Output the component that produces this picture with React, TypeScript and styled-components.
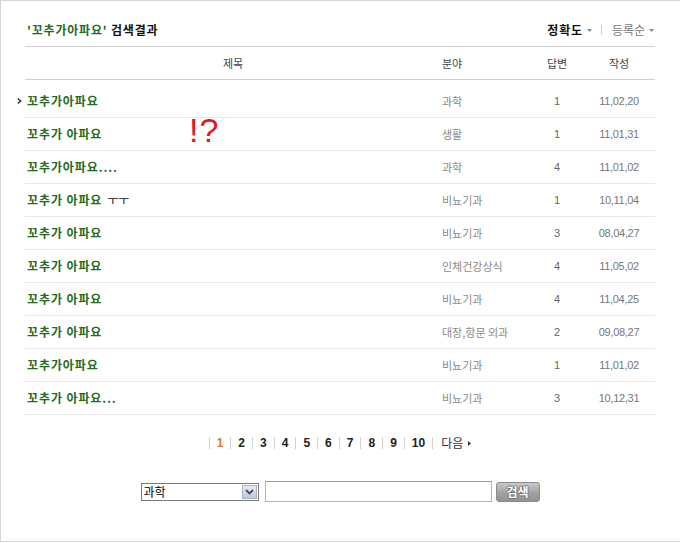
import React from "react";
import styled, { createGlobalStyle } from "styled-components";

const GlobalStyle = createGlobalStyle`
  html, body {
    margin: 0;
    padding: 0;
    background: #fff;
  }
  body {
    font-family: "Liberation Sans", "Noto Sans CJK KR", sans-serif;
    font-size: 12px;
    color: #333;
  }
`;

type Result = {
  title: string;
  suffix?: string;
  field: string;
  answers: number;
  date: string;
};

const results: Result[] = [
  { title: "꼬추가아파요", field: "과학", answers: 1, date: "11,02,20" },
  { title: "꼬추가 아파요", field: "생활", answers: 1, date: "11,01,31" },
  { title: "꼬추가아파요....", field: "과학", answers: 4, date: "11,01,02" },
  { title: "꼬추가 아파요", suffix: "ㅜㅜ", field: "비뇨기과", answers: 1, date: "10,11,04" },
  { title: "꼬추가 아파요", field: "비뇨기과", answers: 3, date: "08,04,27" },
  { title: "꼬추가 아파요", field: "인체건강상식", answers: 4, date: "11,05,02" },
  { title: "꼬추가 아파요", field: "비뇨기과", answers: 4, date: "11,04,25" },
  { title: "꼬추가 아파요", field: "대장,항문 외과", answers: 2, date: "09,08,27" },
  { title: "꼬추가아파요", field: "비뇨기과", answers: 1, date: "11,01,02" },
  { title: "꼬추가 아파요...", field: "비뇨기과", answers: 3, date: "10,12,31" },
];

const pages = [1, 2, 3, 4, 5, 6, 7, 8, 9, 10];

const DownTriangle = () => (
  <svg width="5" height="3" viewBox="0 0 5 3">
    <polygon points="0,0 5,0 2.5,3" fill="#8a8a8a" />
  </svg>
);

const App = () => {
  return (
    <>
      <GlobalStyle />
      <Frame>
        <HeaderBar>
          <SearchTitle>
            <Keyword>'꼬추가아파요'</Keyword> 검색결과
          </SearchTitle>
          <SortMenu>
            <SortOption $active>
              정확도 <DownTriangle />
            </SortOption>
            <SortDivider />
            <SortOption>
              등록순 <DownTriangle />
            </SortOption>
          </SortMenu>
        </HeaderBar>

        <ColumnHeader>
          <HeadCell $align="center">제목</HeadCell>
          <HeadCell $align="left">분야</HeadCell>
          <HeadCell $align="center">답변</HeadCell>
          <HeadCell $align="center">작성</HeadCell>
        </ColumnHeader>

        <List>
          {results.map((r, i) => (
            <Row key={i}>
              <TitleCell>
                {i === 0 && (
                  <CurrentMarker width="5" height="6" viewBox="0 0 5 6">
                    <path d="M0.8 0.6 L3.8 3 L0.8 5.4" fill="none" stroke="#333" strokeWidth="1.4" />
                  </CurrentMarker>
                )}
                <TitleLink>{r.title}</TitleLink>
                {r.suffix && <Suffix>{r.suffix}</Suffix>}
              </TitleCell>
              <FieldCell>{r.field}</FieldCell>
              <AnswerCell>{r.answers}</AnswerCell>
              <DateCell>{r.date}</DateCell>
            </Row>
          ))}
          <Exclaim>!?</Exclaim>
        </List>

        <Pagination>
          <PageDivider />
          {pages.map((p) => (
            <React.Fragment key={p}>
              <PageNumber $current={p === 1}>{p}</PageNumber>
              <PageDivider />
            </React.Fragment>
          ))}
          <NextLink>
            다음
            <svg width="3" height="5" viewBox="0 0 3 5">
              <polygon points="0,0 3,2.5 0,5" fill="#333" />
            </svg>
          </NextLink>
        </Pagination>

        <SearchForm>
          <FakeSelect>
            <SelectValue>과학</SelectValue>
            <SelectArrow>
              <svg width="9" height="6" viewBox="0 0 9 6">
                <path d="M1 1 L4.5 4.5 L8 1" fill="none" stroke="#3c4f72" strokeWidth="1.8" />
              </svg>
            </SelectArrow>
          </FakeSelect>
          <QueryInput type="text" />
          <SearchButton type="button">검색</SearchButton>
        </SearchForm>
      </Frame>
    </>
  );
};

export default App;

const Frame = styled.div`
  width: 680px;
  height: 542px;
  box-sizing: border-box;
  border: 1px solid #d6d6d6;
  border-right: none;
  padding: 0 25px 0 24px;
`;

const HeaderBar = styled.div`
  display: flex;
  justify-content: space-between;
  align-items: center;
  height: 46px;
  box-sizing: border-box;
  padding: 13px 0 0 2px;
  border-bottom: 1px solid #cfcfcf;
`;

const SearchTitle = styled.div`
  font-family: "Noto Sans CJK KR", sans-serif;
  font-size: 12px;
  font-weight: 700;
  line-height: 16px;
  letter-spacing: 0.8px;
  color: #111;
`;

const Keyword = styled.span`
  color: #1f6b1f;
`;

const SortMenu = styled.div`
  display: flex;
  align-items: center;
  padding-right: 1px;
`;

const SortOption = styled.span<{ $active?: boolean }>`
  display: flex;
  align-items: center;
  gap: 4px;
  font-family: "Noto Sans CJK KR", sans-serif;
  font-size: 12px;
  line-height: 16px;
  font-weight: ${(p) => (p.$active ? 700 : 400)};
  letter-spacing: ${(p) => (p.$active ? "0.8px" : "0")};
  color: ${(p) => (p.$active ? "#111" : "#777")};
`;

const SortDivider = styled.span`
  width: 1px;
  height: 10px;
  background: #d0d0d0;
  margin: 0 10px 0 9px;
`;

const gridColumns = "416px 90px 52px 72px";

const ColumnHeader = styled.div`
  display: grid;
  grid-template-columns: ${gridColumns};
  align-items: center;
  height: 32px;
  border-bottom: 1px solid #cfcfcf;
`;

const HeadCell = styled.div<{ $align: "left" | "center" }>`
  text-align: ${(p) => p.$align};
  padding-left: ${(p) => (p.$align === "left" ? "1px" : "0")};
  font-family: "Noto Sans CJK KR", sans-serif;
  font-size: 11px;
  line-height: 14px;
  color: #444;
`;

const List = styled.div`
  position: relative;
  padding-top: 5px;
`;

const Row = styled.div`
  display: grid;
  grid-template-columns: ${gridColumns};
  align-items: center;
  height: 32px;
  border-bottom: 1px solid #e9e9e9;
`;

const TitleCell = styled.div`
  position: relative;
  display: flex;
  align-items: baseline;
  padding-left: 2px;
`;

const CurrentMarker = styled.svg`
  position: absolute;
  left: -8px;
  top: 50%;
  transform: translateY(-50%);
`;

const TitleLink = styled.span`
  font-family: "Noto Sans CJK KR", sans-serif;
  font-size: 12px;
  font-weight: 700;
  line-height: 16px;
  letter-spacing: 0.9px;
  color: #1f6b1f;
  white-space: pre;
`;

const Suffix = styled.span`
  margin-left: 5px;
  font-family: "Noto Sans CJK KR", sans-serif;
  font-size: 12px;
  line-height: 16px;
  color: #111;
`;

const FieldCell = styled.div`
  padding-left: 1px;
  font-family: "Noto Sans CJK KR", sans-serif;
  font-size: 11px;
  line-height: 14px;
  color: #8a8a8a;
  white-space: nowrap;
`;

const AnswerCell = styled.div`
  text-align: center;
  font-size: 11px;
  line-height: 14px;
  color: #666;
`;

const DateCell = styled.div`
  text-align: center;
  font-size: 11px;
  line-height: 14px;
  color: #777;
  letter-spacing: -0.3px;
`;

const Exclaim = styled.div`
  position: absolute;
  left: 164px;
  top: 33px;
  font-family: "Liberation Sans", sans-serif;
  font-size: 34px;
  line-height: 34px;
  color: #e4161e;
  letter-spacing: 1px;
`;

const Pagination = styled.div`
  display: flex;
  justify-content: center;
  align-items: center;
  height: 16px;
  margin-top: 20px;
`;

const PageDivider = styled.span`
  width: 1px;
  height: 12px;
  background: #d3d3d3;
`;

const PageNumber = styled.span<{ $current?: boolean }>`
  padding: 0 7px;
  font-size: 12px;
  line-height: 16px;
  font-weight: 700;
  color: ${(p) => (p.$current ? "#e0761e" : "#222")};
`;

const NextLink = styled.span`
  display: flex;
  align-items: center;
  gap: 5px;
  padding-left: 8px;
  font-family: "Noto Sans CJK KR", sans-serif;
  font-size: 12px;
  line-height: 16px;
  color: #333;
`;

const SearchForm = styled.div`
  display: flex;
  justify-content: center;
  align-items: center;
  margin-top: 30px;
  height: 21px;
`;

const FakeSelect = styled.div`
  display: flex;
  align-items: center;
  justify-content: space-between;
  width: 118px;
  height: 18px;
  box-sizing: border-box;
  border: 1px solid #7b7b7b;
  background: #fff;
`;

const SelectValue = styled.span`
  padding-left: 2px;
  font-family: "Noto Sans CJK KR", sans-serif;
  font-size: 12px;
  line-height: 14px;
  color: #000;
`;

const SelectArrow = styled.span`
  display: flex;
  align-items: center;
  justify-content: center;
  width: 15px;
  height: 14px;
  margin-right: 1px;
  box-sizing: border-box;
  border: 1px solid #aab4c6;
  background: linear-gradient(#e6ebf3, #bfc8d8);
`;

const QueryInput = styled.input`
  width: 227px;
  height: 21px;
  box-sizing: border-box;
  margin: 0 0 0 6px;
  padding: 0 3px;
  border: 1px solid #b3b3b3;
  border-top-color: #9a9a9a;
  outline: none;
  font-size: 12px;
`;

const SearchButton = styled.button`
  width: 44px;
  height: 20px;
  margin-left: 4px;
  padding: 0;
  box-sizing: border-box;
  border: 1px solid #8c8c8c;
  border-radius: 3px;
  background: linear-gradient(#c9c9c9, #a2a2a2 55%, #939393);
  font-family: "Noto Sans CJK KR", sans-serif;
  font-size: 12px;
  font-weight: 700;
  line-height: 16px;
  color: #fff;
  text-shadow: 1px 0 0 #777, -1px 0 0 #777, 0 1px 0 #777, 0 -1px 0 #777;
`;
